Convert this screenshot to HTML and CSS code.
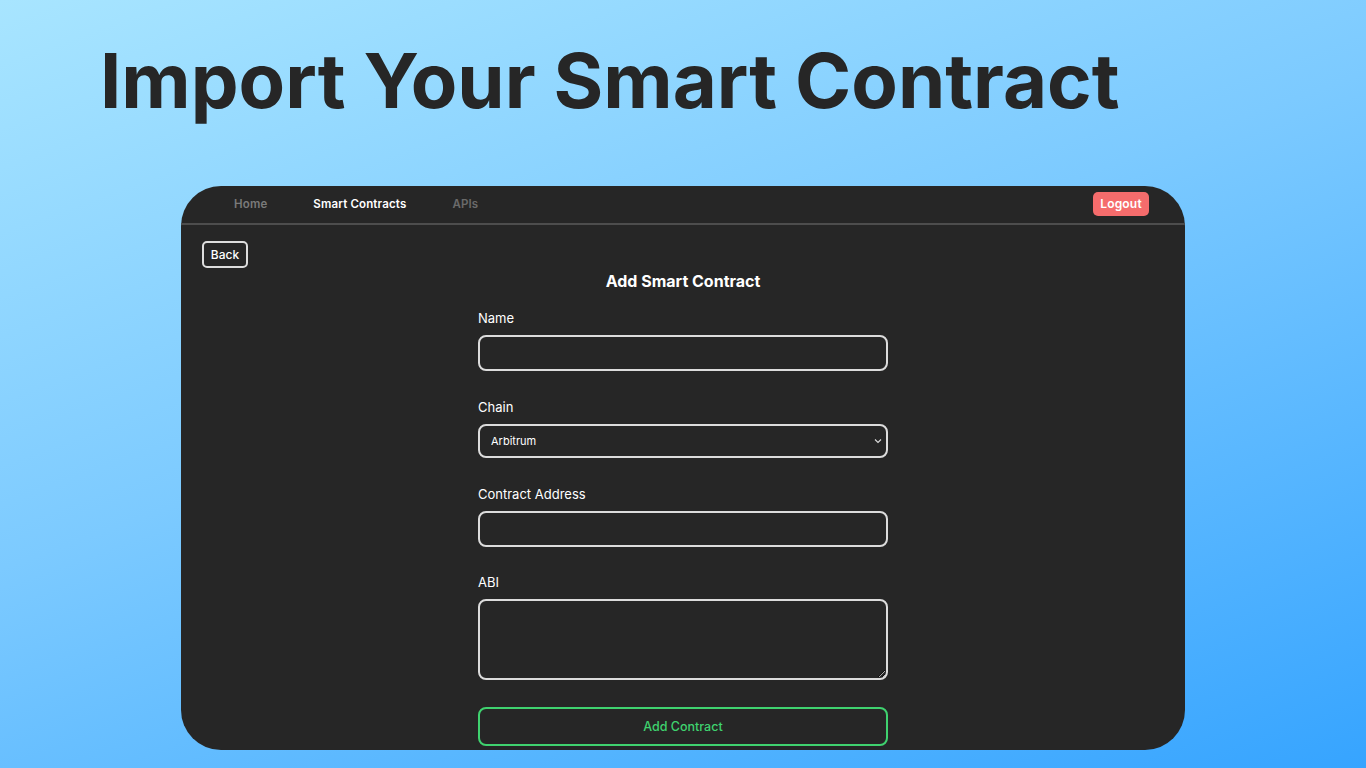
FILE: index.html
```html
<!DOCTYPE html>
<html>
<head>
<meta charset="utf-8">
<link rel="stylesheet" href="styles.css">
</head>
<body>
<h1 class="hero">Import Your Smart Contract</h1>
<div class="card">
  <nav class="nav">
    <div class="links">
      <a class="link dim">Home</a>
      <a class="link active">Smart Contracts</a>
      <a class="link dimmer">APIs</a>
    </div>
    <button class="logout">Logout</button>
  </nav>
  <div class="content">
    <button class="back">Back</button>
    <h2 class="title">Add Smart Contract</h2>
    <form class="form">
      <label class="label">Name</label>
      <input class="field" type="text">
      <label class="label">Chain</label>
      <div class="select-wrap">
        <select class="field select"><option>Arbitrum</option></select>
        <svg class="chev" width="8" height="6" viewBox="0 0 8 6"><path d="M1 1.5 L4 4.5 L7 1.5" fill="none" stroke="#ddd" stroke-width="1.1"/></svg>
      </div>
      <label class="label">Contract Address</label>
      <input class="field addr" type="text">
      <label class="label">ABI</label>
      <textarea class="field area"></textarea>
      <button class="submit" type="button">Add Contract</button>
    </form>
  </div>
</div>
</body>
</html>
```
FILE: styles.css
```css
html, body {
  margin: 0;
  padding: 0;
}
body {
  width: 1366px;
  height: 768px;
  overflow: hidden;
  background: linear-gradient(160deg, #a8e5ff 0%, #7ccaff 45%, #36a4ff 100%);
  font-family: Inter, "Liberation Sans", sans-serif;
}
.hero {
  margin: 0;
  padding: 42px 0 0 100px;
  font-size: 76px;
  line-height: 76px;
  font-weight: 700;
  color: #262626;
  height: 76px;
}
.card {
  margin: 68px 0 0 181px;
  width: 1004px;
  height: 564px;
  background: #262626;
  border-radius: 40px;
  overflow: hidden;
}
.nav {
  height: 37px;
  border-bottom: 2px solid #4d4d4d;
  display: flex;
  align-items: center;
  justify-content: space-between;
  padding: 0 36px 0 30px;
}
.links {
  display: flex;
  margin-top: -1px;
}
.link {
  padding: 0 23px;
  font-size: 11.5px;
  font-weight: 600;
  letter-spacing: 0.15px;
  color: #fff;
}
.link.dim { color: #7a7a7a; }
.link.dimmer { color: #6a6a6a; }
.logout {
  background: #f56c6c;
  border: none;
  border-radius: 5px;
  color: #fff;
  font-family: inherit;
  font-size: 12px;
  font-weight: 600;
  letter-spacing: 0.2px;
  height: 24px;
  width: 56px;
  padding: 0;
  margin-top: -2px;
}
.content {
  padding: 16px 0 0 21px;
}
.back {
  display: block;
  background: transparent;
  border: 2px solid #ddd;
  border-radius: 5px;
  color: #fff;
  font-family: inherit;
  font-size: 12px;
  font-weight: 500;
  width: 46px;
  height: 27px;
  padding: 0;
}
.title {
  margin: 3px 0 0 -21px;
  text-align: center;
  font-size: 16px;
  line-height: 20px;
  font-weight: 700;
  color: #fff;
}
.form {
  width: 410px;
  margin: 19px 0 0 276px;
  display: flex;
  flex-direction: column;
}
.label {
  font-size: 13px;
  line-height: 16px;
  color: #fff;
  margin-bottom: 9px;
}
.field {
  box-sizing: border-box;
  width: 410px;
  height: 36px;
  background: #262626;
  border: 2px solid #dcdcdc;
  border-radius: 8px;
  color: #fff;
  font-family: inherit;
  margin: 0 0 28px 0;
  outline: none;
}
.select-wrap {
  position: relative;
}
.select {
  appearance: none;
  -webkit-appearance: none;
  height: 34px;
  padding: 0 0 0 11px;
  font-size: 11px;
  display: block;
  margin-bottom: 28px;
}
.chev {
  position: absolute;
  right: 6px;
  top: 14px;
}
.addr {
  margin-bottom: 27px;
}
.area {
  height: 81px;
  display: block;
  resize: vertical;
  margin-bottom: 27px;
}
.submit {
  box-sizing: border-box;
  width: 410px;
  height: 39px;
  background: transparent;
  border: 2px solid #3fd26f;
  border-radius: 8px;
  color: #3fd26f;
  font-family: inherit;
  font-size: 12.5px;
  font-weight: 500;
}
```
